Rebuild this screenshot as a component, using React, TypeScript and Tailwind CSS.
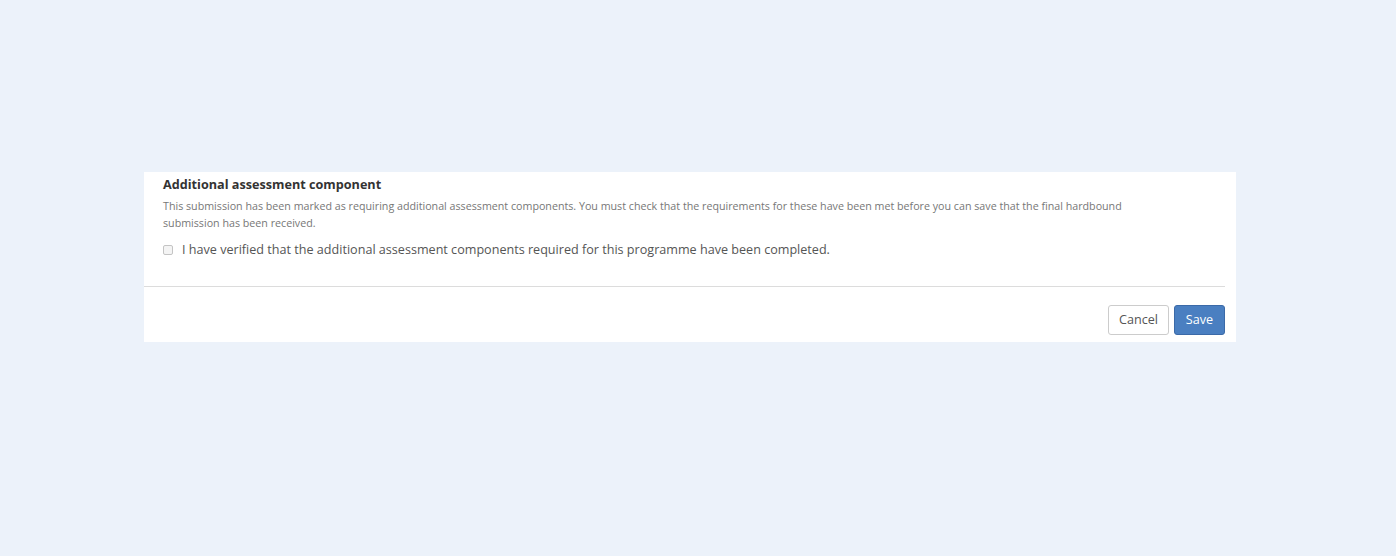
import React, { useState } from 'react';

const App: React.FC = () => {
  const [verified, setVerified] = useState(false);

  return (
    <div
      className="min-h-screen w-full bg-[#ecf2fa] pt-[172px]"
      style={{ fontFamily: '"Open Sans", sans-serif' }}
    >
      <div className="ml-[144px] w-[1092px] bg-white">
        <div className="pl-[19px] pr-[11px] pt-[3px] pb-[27px]">
          <h4 className="text-[12.65px] font-bold leading-[18px] text-[#333]">
            Additional assessment component
          </h4>
          <p className="mt-[5px] w-[975px] text-[10.7px] leading-[17px] text-[#777]">
            This submission has been marked as requiring additional assessment components. You must check that the
            requirements for these have been met before you can save that the final hardbound submission has been
            received.
          </p>
          <label className="mt-[9px] flex items-center gap-[9px] text-[12.6px] leading-[18px] text-[#555]">
            <input
              type="checkbox"
              checked={verified}
              onChange={(e) => setVerified(e.target.checked)}
              className="h-[10px] w-[10px] appearance-none rounded-[2px] border border-[#c4c4c4] bg-[#f4f4f4] checked:bg-[#4a7fc1]"
            />
            I have verified that the additional assessment components required for this programme have been completed.
          </label>
        </div>
        <div className="mr-[11px] border-t border-[#dcdcdc]" />
        <div className="flex justify-end gap-[5px] pr-[11px] pt-[18px] pb-[7px]">
          <button className="flex h-[30px] w-[61px] items-center justify-center rounded-[3px] border border-[#ccc] bg-white text-[12.6px] text-[#555]">
            Cancel
          </button>
          <button className="flex h-[30px] w-[51px] items-center justify-center rounded-[3px] border border-[#3b6aa8] bg-[#4a7fc1] text-[12.6px] text-white">
            Save
          </button>
        </div>
      </div>
    </div>
  );
};

export default App;
